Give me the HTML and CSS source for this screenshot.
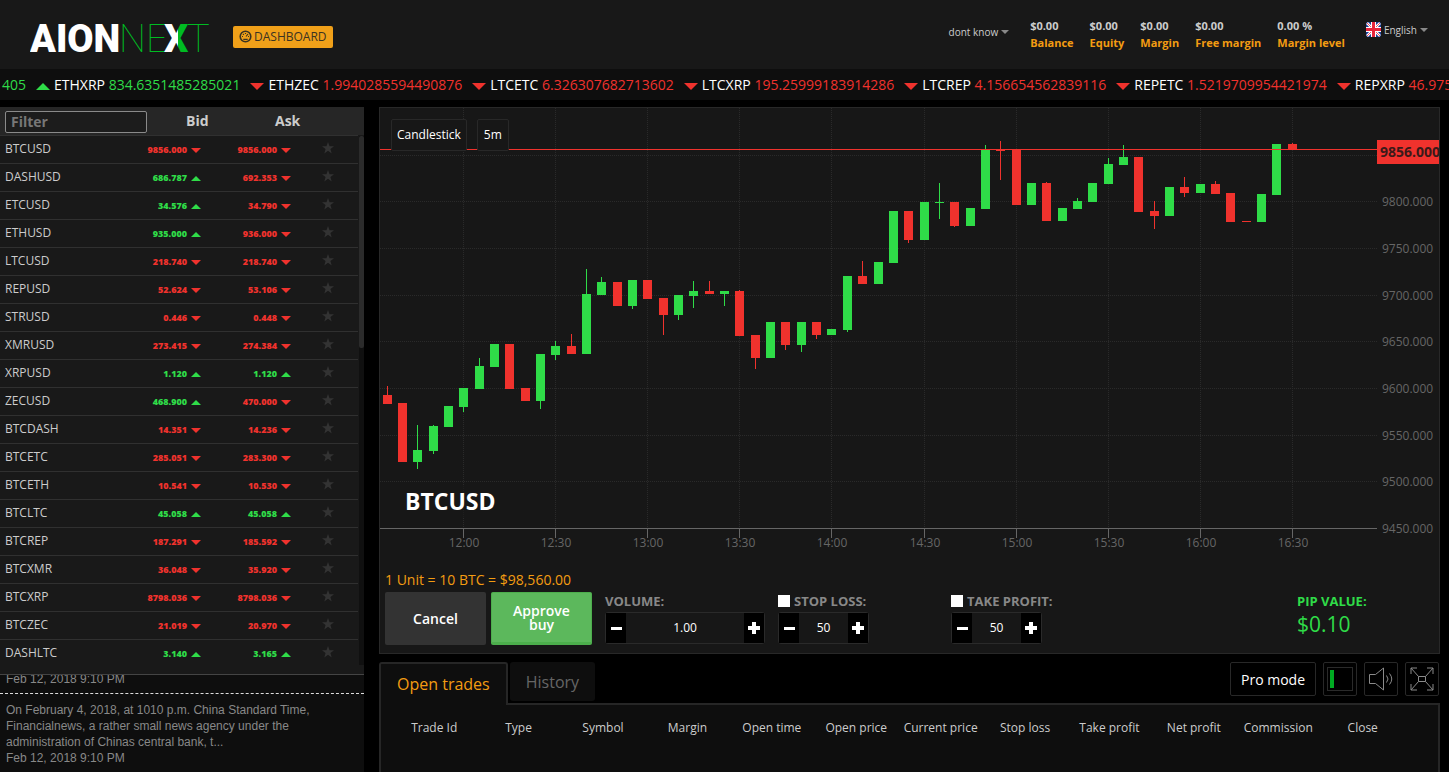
FILE: index.html
```
<!DOCTYPE html>
<html lang="en">
<head>
<meta charset="utf-8">
<title>AIONNEXT</title>
<link rel="stylesheet" href="styles.css">
</head>
<body>
<header class="topbar">
  <a class="logo" href="#" aria-label="AIONNEXT">
    <svg width="184" height="52" viewBox="0 0 184 52">
      <defs>
        <linearGradient id="split"><stop offset=".56" stop-color="#fff"/><stop offset=".56" stop-color="#0b2"/></linearGradient>
      </defs>
      <text class="logo-heavy" x="0" y="41">AION</text>
      <text class="logo-thin" x="89" y="41">NE</text>
      <text class="logo-x" x="134" y="41">X</text>
      <text class="logo-thin" x="157" y="41">T</text>
    </svg>
  </a>
  <a class="dash" href="#">
    <svg width="13" height="13" viewBox="0 0 13 13" fill="none" stroke="#3a3322"><circle cx="6.500" cy="6.500" r="5.300" stroke-width="1.600"/><path d="M3 6.500h1M9 6.500h1M6.500 3v1M4 4l.8.800M7 6.500l2-2.500M4.300 9.300h4.400" stroke-width="1.200"/></svg>
    DASHBOARD
  </a>
  <div class="account">
    <button class="menu user">dont know <span class="caret"></span></button>
    <dl class="stats">
      <div><dd>$0.00</dd><dt>Balance</dt></div>
      <div><dd>$0.00</dd><dt>Equity</dt></div>
      <div><dd>$0.00</dd><dt>Margin</dt></div>
      <div><dd>$0.00</dd><dt>Free margin</dt></div>
      <div><dd>0.00 %</dd><dt>Margin level</dt></div>
    </dl>
    <button class="menu lang">
      <svg width="15" height="15" viewBox="0 0 15 15"><rect width="15" height="15" rx="2" fill="#1c3f94"/><path d="M1 1l13 13M14 1L1 14" stroke="#fff" stroke-width="2.500"/><path d="M1 1l13 13M14 1L1 14" stroke="#e8253b" stroke-width=".8"/><path d="M7.500 0v15M0 7.500h15" stroke="#fff" stroke-width="5"/><path d="M7.500 0v15M0 7.500h15" stroke="#e8253b" stroke-width="3"/></svg>
      English <span class="caret"></span>
    </button>
  </div>
</header>

<div class="ticker">
  <span class="tick"><b class="up">405</b></span>
  <span class="tick"><i class="tri up"></i>ETHXRP <b class="up">834.6351485285021</b></span>
  <span class="tick"><i class="tri down"></i>ETHZEC <b class="down">1.9940285594490876</b></span>
  <span class="tick"><i class="tri down"></i>LTCETC <b class="down">6.326307682713602</b></span>
  <span class="tick"><i class="tri down"></i>LTCXRP <b class="down">195.25999183914286</b></span>
  <span class="tick"><i class="tri down"></i>LTCREP <b class="down">4.156654562839116</b></span>
  <span class="tick"><i class="tri down"></i>REPETC <b class="down">1.5219709954421974</b></span>
  <span class="tick"><i class="tri down"></i>REPXRP <b class="down">46.975</b></span>
</div>

<div class="workspace">
  <aside class="side">
    <section class="quotes">
      <table>
        <colgroup><col class="c-sym"><col class="c-bid"><col class="c-ask"><col></colgroup>
        <thead><tr><th><input type="text" placeholder="Filter" aria-label="Filter"></th><th class="h-bid">Bid</th><th class="h-ask">Ask</th><th></th></tr></thead>
        <tbody id="quotes"></tbody>
      </table>
      <div class="scroll"><div class="thumb"></div></div>
    </section>
    <section class="news">
      <article><p>Feb 12, 2018 9:10 PM</p></article>
      <article><p>On February 4, 2018, at 1010 p.m. China Standard Time, Financialnews, a rather small news agency under the administration of Chinas central bank, t...</p><p>Feb 12, 2018 9:10 PM</p></article>
    </section>
  </aside>

  <main class="main">
    <section class="panel">
      <div class="chart">
        <svg id="chart" viewBox="380 108 1059 450"></svg>
        <div class="chart-tools"><button>Candlestick</button><button>5m</button></div>
        <h1 class="chart-name">BTCUSD</h1>
      </div>
      <form class="order">
        <p class="unit">1 Unit = 10 BTC = $98,560.00</p>
        <div class="order-row">
          <button type="button" class="btn cancel">Cancel</button>
          <button type="button" class="btn approve">Approve buy</button>
          <div class="field volume">
            <label for="vol">VOLUME:</label>
            <div class="stepper"><button type="button" class="minus" aria-label="Less"></button><input id="vol" value="1.00"><button type="button" class="plus" aria-label="More"></button></div>
          </div>
          <div class="field stop">
            <label><input type="checkbox">STOP LOSS:</label>
            <div class="stepper"><button type="button" class="minus" aria-label="Less"></button><input aria-label="Stop loss" value="50"><button type="button" class="plus" aria-label="More"></button></div>
          </div>
          <div class="field take">
            <label><input type="checkbox">TAKE PROFIT:</label>
            <div class="stepper"><button type="button" class="minus" aria-label="Less"></button><input aria-label="Take profit" value="50"><button type="button" class="plus" aria-label="More"></button></div>
          </div>
          <div class="pip"><span>PIP VALUE:</span><strong>$0.10</strong></div>
        </div>
      </form>
    </section>

    <nav class="tabs">
      <button class="tab active">Open trades</button>
      <button class="tab">History</button>
      <div class="tools">
        <button class="tool pro">Pro mode</button>
        <button class="tool" aria-label="Layout"><svg width="26" height="24" viewBox="0 0 26 24"><rect x=".5" y=".5" width="25" height="23" fill="none" stroke="#2a2a2a"/><path d="M5 3v18" stroke="#0a2" stroke-width="4"/></svg></button>
        <button class="tool" aria-label="Sound"><svg width="24" height="24" viewBox="0 0 24 24" fill="none" stroke="#8a8a8a"><path d="M.5 7.500h6L14.500 1v22l-8-6.500h-6zM17.500 8.500q3 3.500 0 7M20.500 6.500q4.500 5.500 0 11"/></svg></button>
        <button class="tool" aria-label="Full screen"><svg width="24" height="24" viewBox="0 0 24 24" fill="none" stroke="#8a8a8a"><path d="M8.500 9.500h7v5h-7zM8.500 9.500L1 1M15.500 9.500L23 1M8.500 14.500L1 23M15.500 14.500L23 23M1 7V1h6M17 1h6v6M1 17v6h6M17 23h6v-6"/></svg></button>
      </div>
    </nav>

    <section class="trades">
      <table>
        <thead><tr><th>Trade Id</th><th>Type</th><th>Symbol</th><th>Margin</th><th>Open time</th><th>Open price</th><th>Current price</th><th>Stop loss</th><th>Take profit</th><th>Net profit</th><th>Commission</th><th>Close</th></tr></thead>
      </table>
    </section>
  </main>
</div>
<script src="app.js"></script>
</body>
</html>
```
FILE: styles.css
```
* { box-sizing: border-box; }
body {
  margin: 0;
  height: 100vh;
  display: flex;
  flex-direction: column;
  overflow: hidden;
  background: #000;
  color: #ccc;
  font-family: "Open Sans", "Noto Sans", sans-serif;
  font-size: 12px;
}
button, input { font: inherit; color: inherit; }
button { margin: 0; padding: 0; border: 0; background: none; cursor: pointer; }
p, h1, dl, dd { margin: 0; }
table { border-collapse: separate; border-spacing: 0; table-layout: fixed; }
.up { color: #2fdc48; }
.down { color: #f0322d; }

/* header */
.topbar {
  height: 69px;
  flex: none;
  display: flex;
  align-items: center;
  padding: 4px 21px 0 30px;
  background: #181818;
}
.logo { display: flex; }
.logo-heavy { font: 900 38px Roboto, sans-serif; fill: #fff; }
.logo-x { font: 900 38px Roboto, sans-serif; fill: url(#split); }
.logo-thin { font: 100 38px Roboto, sans-serif; fill: #0b2; }
.dash {
  display: flex;
  align-items: center;
  gap: 2px;
  height: 22px;
  margin-left: 19px;
  padding: 0 6px;
  border-radius: 2px;
  background: #f0a019;
  color: #3a3322;
  text-decoration: none;
}
.account { margin: 0 0 6px auto; display: flex; align-items: flex-start; }
.menu { display: flex; align-items: center; gap: 3px; font-size: 10px; line-height: 16px; }
.user { margin: 7px 21px 0 0; }
.lang { margin: 5px 0 0 21px; }
.caret { border: 4px solid transparent; border-top-color: #888; border-bottom: 0; }
.stats { display: flex; gap: 16px; font-size: 11px; font-weight: 700; line-height: 17px; }
.stats dt { color: #f39c12; }

/* price ticker */
.ticker {
  height: 31px;
  flex: none;
  display: flex;
  align-items: center;
  gap: 10px;
  padding-left: 2px;
  overflow: hidden;
  white-space: nowrap;
  background: #0e0e0e;
  color: #fff;
  font-size: 14px;
}
.tick { flex: none; }
.tick b { font-weight: 400; }
.tri {
  display: inline-block;
  margin-right: 4px;
  border: 7px solid transparent;
}
.tri.up { border-bottom-color: #2fdc48; border-top: 0; }
.tri.down { border-top-color: #f0322d; border-bottom: 0; }

.workspace {
  flex: 1;
  min-height: 0;
  display: flex;
  gap: 15px;
  padding: 7px 9px 0 0;
}

/* quotes */
.side { width: 364px; flex: none; display: flex; flex-direction: column; }
.quotes {
  position: relative;
  flex: none;
  padding-bottom: 6px;
  border-bottom: 1px solid #444;
  background: linear-gradient(#262626 28px, #191919 28px);
}
.quotes table { width: calc(100% - 6px); }
.c-sym { width: 147px; }
.c-bid { width: 84px; }
.c-ask { width: 90px; }
.quotes th { height: 29px; padding: 0; font-size: 14px; line-height: 20px; text-align: left; border-bottom: 1px solid #303030; }
.quotes th:first-child { padding: 2px 0 0 5px; }
.quotes th input {
  display: block;
  width: 142px;
  height: 22px;
  padding: 0 5px 2px;
  border: 1px solid #8a8a8a;
  border-radius: 2px;
  background: #1c1c1c;
  font-weight: 700;
}
.quotes th input::placeholder { color: #777; }
.quotes .h-bid { padding-left: 39px; }
.quotes .h-ask { padding-left: 44px; }
.quotes td { height: 28px; padding: 0; border-bottom: 1px solid #303030; line-height: 18px; white-space: nowrap; vertical-align: middle; }
.quotes tr:last-child td { border-bottom-color: transparent; }
.quotes .sym { padding: 0 0 1px 5px; }
.quotes .price { padding: 1px 30px 0 0; text-align: right; font-size: 9px; font-weight: 800; }
.price .tri { margin: 0 0 0 4px; border-width: 5px; }
.price .tri.up { border-top: 0; }
.price .tri.down { border-bottom: 0; }
.quotes .fav { padding: 0 0 0 1px; }
.fav button { display: block; }
.scroll { position: absolute; top: 29px; right: 0; bottom: 9px; width: 5px; background: #101010; }
.thumb { height: 40%; border-radius: 2px; background: #2b2b2b; }

/* news */
.news {
  flex: 1;
  min-height: 0;
  display: flex;
  flex-direction: column;
  justify-content: flex-end;
  overflow: hidden;
  padding-bottom: 6px;
  background: #0e0e0e;
  color: #888;
  font-family: "Liberation Sans", Arial, sans-serif;
  line-height: 16px;
}
.news article { padding: 8px 30px 0 6px; }
.news article + article { margin-top: 6px; border-top: 1px dashed #ddd; }

/* chart */
.main { flex: 1; min-width: 0; display: flex; flex-direction: column; }
.panel { flex: none; border: 1px solid #282828; background: #171717; }
.chart { position: relative; }
.chart > svg { display: block; width: 100%; height: auto; shape-rendering: crispEdges; }
.grid { stroke: #2a2a2a; stroke-dasharray: 1 1; }
.axis { stroke: #666; }
.labels { fill: #666; font-size: 12px; }
.candle-up { fill: #2fdc48; }
.candle-down { fill: #f0322d; }
.price-line { stroke: #f0322d; }
.price-tag { fill: #3b1a19; font-size: 14px; font-weight: 700; }
.chart-tools { position: absolute; left: 11px; top: 11px; display: flex; gap: 10px; }
.chart-tools button {
  height: 32px;
  padding: 0 5px 1px;
  border: 1px solid #282828;
  border-radius: 2px;
  background: #171717;
  color: #fff;
}
.chart-tools button + button { padding: 0 6px 1px; }
.chart-name {
  position: absolute;
  left: 11px;
  bottom: 41px;
  padding: 0 14px;
  background: rgba(23, 23, 23, .6);
  color: #fff;
  font-size: 23px;
  line-height: 32px;
}

/* order form */
.order { padding: 12px 5px 8px; }
.unit { color: #f39c12; font-size: 14px; line-height: 20px; }
.order-row { display: flex; padding-top: 2px; }
.btn {
  width: 101px;
  height: 53px;
  padding: 0 16px;
  border-radius: 2px;
  color: #fff;
  font-size: 14px;
  font-weight: 600;
  line-height: 14px;
}
.cancel { background: #333; }
.approve { margin-left: 5px; border: 1px solid #4cae4c; border-bottom-width: 3px; background: #5cb85c; }
.field { display: flex; flex-direction: column; gap: 2px; color: #888; font-size: 13px; font-weight: 700; line-height: 18px; white-space: nowrap; }
.field label { display: flex; align-items: center; gap: 4px; }
.field label input {
  appearance: none;
  flex: none;
  width: 12px;
  height: 12px;
  margin: 0;
  background: #fff;
}
.volume { width: 160px; margin-left: 13px; }
.stop { width: 91px; margin-left: 13px; }
.take { width: 91px; margin-left: 82px; }
.stepper { display: flex; height: 32px; border: 1px solid #2a2a2a; border-radius: 3px; }
.stepper button { flex: none; width: 20px; background: #000; }
.stepper button::before { content: ""; display: block; width: 12px; height: 12px; margin: 0 auto; }
.minus::before { background: linear-gradient(#fff, #fff) center / 11px 3px no-repeat; }
.plus::before { background: linear-gradient(#fff, #fff) center / 12px 4px no-repeat, linear-gradient(#fff, #fff) center / 4px 12px no-repeat; }
.stepper input {
  flex: 1;
  min-width: 0;
  padding: 0;
  border: 0;
  background: none;
  color: #fff;
  font-size: 12px;
  font-weight: 400;
  text-align: center;
}
.pip { display: flex; flex-direction: column; width: 68px; margin: 0 69px 0 auto; color: #2fdc48; white-space: nowrap; }
.pip span { font-size: 13px; font-weight: 700; line-height: 18px; }
.pip strong { font-size: 21px; font-weight: 400; line-height: 28px; }

/* tabs */
.tabs { position: relative; flex: none; display: flex; align-items: flex-start; margin: 8px 0 -2px; height: 43px; }
.tab { height: 39px; margin-left: 2px; padding: 0 16px; border-radius: 3px; background: #0e0e0e; color: #666; font-size: 16px; }
.tab.active { height: 43px; margin: 0; padding-bottom: 2px; border: 2px solid #262626; border-bottom: 0; border-radius: 3px 3px 0 0; color: #f39c12; }
.tools { display: flex; gap: 7px; margin: 0 1px 0 auto; }
.tool {
  display: flex;
  align-items: center;
  justify-content: center;
  width: 34px;
  height: 34px;
  border: 1px solid #282828;
  border-radius: 2px;
}
.pro { width: 86px; color: #fff; font-size: 14px; }

.trades { flex: 1; min-height: 0; padding: 13px 33px 0 11px; border: 2px solid #262626; border-bottom: 0; background: #0e0e0e; }
.trades table { width: 100%; }
.trades th { padding: 0; font-weight: 400; line-height: 20px; white-space: nowrap; }
```
FILE: app.js
```
// symbol, bid, bid direction, ask, ask direction
const quotes = [
  ["BTCUSD", "9856.000", 0, "9856.000", 0],
  ["DASHUSD", "686.787", 1, "692.353", 0],
  ["ETCUSD", "34.576", 1, "34.790", 0],
  ["ETHUSD", "935.000", 1, "936.000", 0],
  ["LTCUSD", "218.740", 0, "218.740", 0],
  ["REPUSD", "52.624", 0, "53.106", 0],
  ["STRUSD", "0.446", 0, "0.448", 0],
  ["XMRUSD", "273.415", 0, "274.384", 0],
  ["XRPUSD", "1.120", 1, "1.120", 1],
  ["ZECUSD", "468.900", 1, "470.000", 0],
  ["BTCDASH", "14.351", 0, "14.236", 0],
  ["BTCETC", "285.051", 0, "283.300", 0],
  ["BTCETH", "10.541", 0, "10.530", 0],
  ["BTCLTC", "45.058", 1, "45.058", 1],
  ["BTCREP", "187.291", 0, "185.592", 0],
  ["BTCXMR", "36.048", 0, "35.920", 0],
  ["BTCXRP", "8798.036", 0, "8798.036", 0],
  ["BTCZEC", "21.019", 0, "20.970", 0],
  ["DASHLTC", "3.140", 1, "3.165", 1]
];

const star = '<svg width="12" height="12" viewBox="0 0 12 12"><path d="M6 0l1.500 4.300H12L8.400 7l1.300 4.500L6 8.800l-3.700 2.700L3.600 7 0 4.300h4.500z" fill="#333"/></svg>';
const cell = (value, up) => {
  const dir = up ? "up" : "down";
  return `<td class="price ${dir}">${value}<i class="tri ${dir}"></i></td>`;
};
document.getElementById("quotes").innerHTML = quotes.map(([s, b, bu, a, au]) =>
  `<tr><td class="sym">${s}</td>${cell(b, bu)}${cell(a, au)}<td class="fav"><button aria-label="Favourite ${s}">${star}</button></td></tr>`
).join("");

// x, body top, body bottom, wick top, wick bottom, rising
const candles = [
  [383,395,404,386,404,0],[398,403,462,403,462,0],[413,450,462,425,469,1],[429,426,451,425,454,1],
  [444,406,427,406,427,1],[459,388,407,388,412,1],[475,366,389,358,389,1],[490,344,367,344,367,1],
  [505,344,389,344,389,0],[521,388,401,388,401,0],[536,354,401,354,409,1],[551,346,355,341,360,1],
  [567,346,354,334,354,0],[582,294,354,269,354,1],[597,282,295,277,295,1],[613,282,306,282,306,0],
  [628,280,306,280,309,1],[643,280,299,280,299,0],[659,298,315,298,335,0],[674,295,315,295,320,1],
  [689,291,296,281,308,1],[705,291,294,281,294,0],[720,291,294,291,306,1],[735,291,336,290,336,0],
  [751,335,358,335,369,0],[766,322,358,322,358,1],[781,322,345,322,350,0],[797,322,345,322,352,1],
  [812,322,335,322,339,0],[827,329,335,329,335,1],[843,276,330,276,332,1],[858,276,284,261,284,0],
  [874,262,284,262,284,1],[889,211,263,211,263,1],[904,211,240,211,243,0],[920,202,240,202,240,1],
  [935,202,203,183,219,1],[950,202,226,202,227,0],[966,208,226,208,226,1],[981,149,209,145,209,1],
  [996,149,151,141,180,0],[1012,149,205,149,205,0],[1027,183,205,183,205,1],[1042,183,221,182,221,0],
  [1058,208,221,208,221,1],[1073,201,209,198,209,1],[1088,183,202,183,202,1],[1104,164,184,158,184,1],
  [1119,157,165,145,165,1],[1134,157,212,157,212,0],[1150,211,216,201,229,0],[1165,187,216,187,216,1],
  [1180,187,193,177,197,0],[1196,184,193,184,193,1],[1211,184,194,181,194,0],[1226,193,222,193,222,0],
  [1242,221,222,221,222,0],[1257,194,222,194,222,1],[1272,144,195,144,195,1],[1288,144,150,143,150,0]
];
const rows = [[155, ""], [201, "9800.000"], [248, "9750.000"], [295, "9700.000"], [341, "9650.000"],
  [388, "9600.000"], [435, "9550.000"], [481, "9500.000"], [528, "9450.000"]];
const cols = [[463, "12:00"], [555, "12:30"], [647, "13:00"], [739, "13:30"], [831, "14:00"],
  [924, "14:30"], [1016, "15:00"], [1108, "15:30"], [1200, "16:00"], [1292, "16:30"]];
const line = (x1, y1, x2, y2) => `<path d="M${x1} ${y1}L${x2} ${y2}"/>`;

document.getElementById("chart").innerHTML =
  '<g class="grid">' +
    rows.slice(0, -1).map(([y]) => line(380, y + .5, 1377, y + .5)).join("") +
    cols.map(([x]) => line(x + .5, 108, x + .5, 528)).join("") +
  '</g><g class="axis">' + line(380, 528.5, 1377, 528.5) +
    cols.map(([x]) => line(x + .5, 529, x + .5, 538)).join("") +
  '</g><g class="labels">' +
    rows.map(([y, t]) => `<text x="1382" y="${y + 5}">${t}</text>`).join("") +
    cols.map(([x, t]) => `<text x="${x + 1}" y="547" text-anchor="middle">${t}</text>`).join("") +
  '</g>' +
  candles.map(([x, t, b, wt, wb, up]) =>
    `<g class="${up ? "candle-up" : "candle-down"}"><rect x="${x}" y="${t}" width="9" height="${b - t}"/><rect x="${x + 4}" y="${wt}" width="1" height="${wb - wt}"/></g>`
  ).join("") +
  '<g class="price-line">' + line(380, 149.5, 1377, 149.5) + '</g>' +
  '<rect class="candle-down" x="1377" y="140" width="62" height="24"/>' +
  '<text class="price-tag" x="1380" y="157">9856.000</text>';
```
